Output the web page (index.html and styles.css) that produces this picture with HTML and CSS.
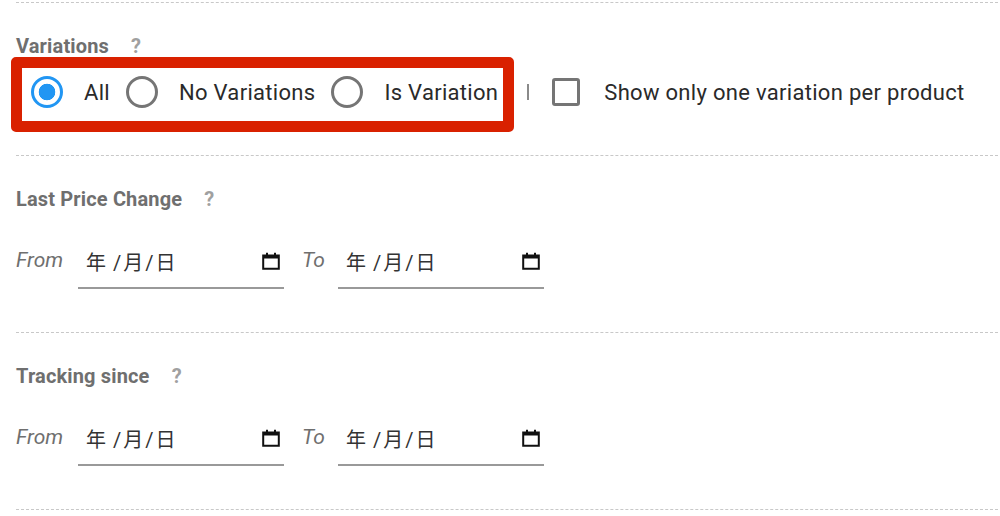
FILE: index.html
```html
<!DOCTYPE html>
<html lang="en">
<head>
  <meta charset="UTF-8" />
  <title>Filters</title>
  <link rel="stylesheet" href="styles.css">
</head>
<body>
  <div class="section section-variations">
    <div class="title">Variations <span class="help">?</span></div>
    <div class="options">
      <label class="radio-item item-all"><span class="radio checked"></span><span class="text">All</span></label>
      <label class="radio-item item-none"><span class="radio"></span><span class="text">No Variations</span></label>
      <label class="radio-item item-is"><span class="radio"></span><span class="text">Is Variation</span></label>
      <span class="pipe"></span>
      <label class="radio-item item-check"><span class="checkbox"></span><span class="text">Show only one variation per product</span></label>
      <div class="highlight"></div>
    </div>
  </div>

  <div class="section">
    <div class="title">Last Price Change <span class="help">?</span></div>
    <div class="range">
      <span class="range-label">From</span>
      <div class="date"><span class="date-text">年 <i>/</i>月<i>/</i>日</span><svg class="cal" viewBox="0 0 18 18"><path d="M1.2 3.4h15.6v13.4H1.2z" fill="none" stroke="#111" stroke-width="2"/><path d="M1 3h16v3.4H1zM4 .8h2v3H4zM12 .8h2v3h-2z" fill="#111"/></svg></div>
      <span class="range-label to">To</span>
      <div class="date"><span class="date-text">年 <i>/</i>月<i>/</i>日</span><svg class="cal" viewBox="0 0 18 18"><path d="M1.2 3.4h15.6v13.4H1.2z" fill="none" stroke="#111" stroke-width="2"/><path d="M1 3h16v3.4H1zM4 .8h2v3H4zM12 .8h2v3h-2z" fill="#111"/></svg></div>
    </div>
  </div>

  <div class="section section-last">
    <div class="title">Tracking since <span class="help">?</span></div>
    <div class="range">
      <span class="range-label">From</span>
      <div class="date"><span class="date-text">年 <i>/</i>月<i>/</i>日</span><svg class="cal" viewBox="0 0 18 18"><path d="M1.2 3.4h15.6v13.4H1.2z" fill="none" stroke="#111" stroke-width="2"/><path d="M1 3h16v3.4H1zM4 .8h2v3H4zM12 .8h2v3h-2z" fill="#111"/></svg></div>
      <span class="range-label to">To</span>
      <div class="date"><span class="date-text">年 <i>/</i>月<i>/</i>日</span><svg class="cal" viewBox="0 0 18 18"><path d="M1.2 3.4h15.6v13.4H1.2z" fill="none" stroke="#111" stroke-width="2"/><path d="M1 3h16v3.4H1zM4 .8h2v3H4zM12 .8h2v3h-2z" fill="#111"/></svg></div>
    </div>
  </div>
</body>
</html>
```

FILE: styles.css
```css
body {
  margin: 0;
  padding: 2px 2px 0 16px;
  font-family: Roboto, "Noto Sans CJK JP", sans-serif;
  background: #fff;
  color: #222;
}

.section {
  height: 176px;
  border-top: 1px dashed #c8c8c8;
}

.section-variations {
  height: 152px;
}

.section-last {
  border-bottom: 1px dashed #c8c8c8;
}

.title {
  margin-top: 31px;
  height: 24px;
  line-height: 24px;
  font-size: 20px;
  font-weight: 700;
  color: #6f6f6f;
  letter-spacing: 0.15px;
}

.help {
  margin-left: 17px;
  color: #a0a0a0;
  font-size: 20px;
}

.options {
  position: relative;
  display: flex;
  align-items: center;
  margin-top: 18px;
  height: 32px;
  margin-left: 15px;
}

.radio-item {
  display: flex;
  align-items: center;
  gap: 21px;
}

.item-all,
.item-none {
  margin-right: 16px;
}

.item-check {
  gap: 24px;
}

.text {
  font-size: 22px;
  letter-spacing: 0.3px;
  color: #2a2a2a;
}

.radio {
  width: 32px;
  height: 32px;
  box-sizing: border-box;
  border: 3px solid #757575;
  border-radius: 50%;
  flex: none;
}

.radio.checked {
  border-color: #2196f3;
  background: radial-gradient(circle, #2196f3 0 8px, #fff 8.6px);
}

.pipe {
  width: 2px;
  height: 16px;
  background: #8a8a8a;
  margin: 0 23px 0 29px;
}

.checkbox {
  width: 28px;
  height: 28px;
  box-sizing: border-box;
  border: 3px solid #757575;
  border-radius: 3px;
  flex: none;
}

.highlight {
  position: absolute;
  left: -20px;
  top: -19px;
  width: 503px;
  height: 75px;
  box-sizing: border-box;
  border: 11px solid #d92100;
  border-radius: 5px;
}

.range {
  display: flex;
  align-items: flex-start;
  margin-top: 28px;
}

.range-label {
  width: 62px;
  padding-top: 9px;
  font-size: 21px;
  font-style: italic;
  color: #6f6f6f;
}

.range-label.to {
  width: 36px;
  margin-left: 18px;
}

.date {
  display: flex;
  align-items: center;
  justify-content: space-between;
  width: 206px;
  height: 50px;
  box-sizing: border-box;
  padding: 0 4px 4px 8px;
  border-bottom: 2px solid #999;
}

.date-text {
  font-size: 20px;
  color: #333;
}

.date-text i {
  font-style: normal;
  margin: 0 2px;
}

.cal {
  width: 18px;
  height: 18px;
}
```
